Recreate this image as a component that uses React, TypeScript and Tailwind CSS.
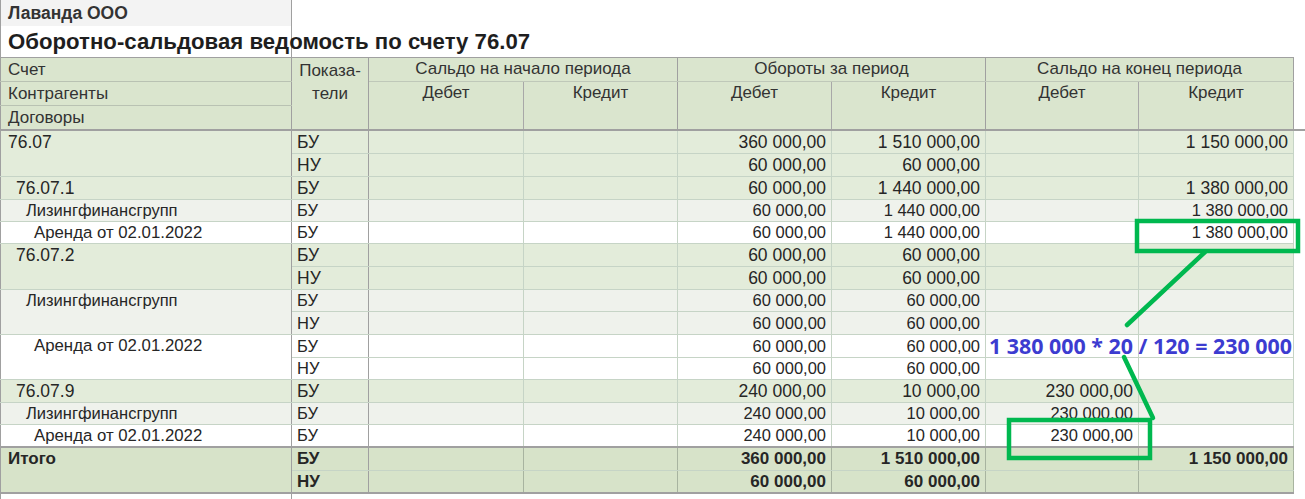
import React from "react";

type Kind = "acc" | "ka" | "dog" | "tot";
type Row = {
  label?: string;
  span?: number;
  ind?: string;
  ind2: string;
  v: string[];
  kind: Kind;
  h: string;
  lh: string;
  note?: boolean;
  totTop?: boolean;
};

const H23 = "h-[23px]";
const H22 = "h-[22px]";
const L23 = "leading-[22px]";
const L22 = "leading-[21px]";

const rows: Row[] = [
  { label: "76.07", span: 2, ind: "pl-[7px]", ind2: "БУ", v: ["", "", "360 000,00", "1 510 000,00", "", "1 150 000,00"], kind: "acc", h: H23, lh: L23 },
  { ind2: "НУ", v: ["", "", "60 000,00", "60 000,00", "", ""], kind: "acc", h: H23, lh: L23 },
  { label: "76.07.1", span: 1, ind: "pl-[15px]", ind2: "БУ", v: ["", "", "60 000,00", "1 440 000,00", "", "1 380 000,00"], kind: "acc", h: H23, lh: L23 },
  { label: "Лизингфинансгрупп", span: 1, ind: "pl-[25px]", ind2: "БУ", v: ["", "", "60 000,00", "1 440 000,00", "", "1 380 000,00"], kind: "ka", h: H22, lh: L22 },
  { label: "Аренда от 02.01.2022", span: 1, ind: "pl-[33px]", ind2: "БУ", v: ["", "", "60 000,00", "1 440 000,00", "", "1 380 000,00"], kind: "dog", h: H22, lh: L22 },
  { label: "76.07.2", span: 2, ind: "pl-[15px]", ind2: "БУ", v: ["", "", "60 000,00", "60 000,00", "", ""], kind: "acc", h: H23, lh: L23 },
  { ind2: "НУ", v: ["", "", "60 000,00", "60 000,00", "", ""], kind: "acc", h: H23, lh: L23 },
  { label: "Лизингфинансгрупп", span: 2, ind: "pl-[25px]", ind2: "БУ", v: ["", "", "60 000,00", "60 000,00", "", ""], kind: "ka", h: H22, lh: L22 },
  { ind2: "НУ", v: ["", "", "60 000,00", "60 000,00", "", ""], kind: "ka", h: H23, lh: L23 },
  { label: "Аренда от 02.01.2022", span: 2, ind: "pl-[33px]", ind2: "БУ", v: ["", "", "60 000,00", "60 000,00", "", ""], kind: "dog", h: H23, lh: L23, note: true },
  { ind2: "НУ", v: ["", "", "60 000,00", "60 000,00", "", ""], kind: "dog", h: H22, lh: L22 },
  { label: "76.07.9", span: 1, ind: "pl-[15px]", ind2: "БУ", v: ["", "", "240 000,00", "10 000,00", "230 000,00", ""], kind: "acc", h: H23, lh: L23 },
  { label: "Лизингфинансгрупп", span: 1, ind: "pl-[25px]", ind2: "БУ", v: ["", "", "240 000,00", "10 000,00", "230 000,00", ""], kind: "ka", h: H22, lh: L22 },
  { label: "Аренда от 02.01.2022", span: 1, ind: "pl-[33px]", ind2: "БУ", v: ["", "", "240 000,00", "10 000,00", "230 000,00", ""], kind: "dog", h: H22, lh: L22 },
  { label: "Итого", span: 2, ind: "pl-[7px]", ind2: "БУ", v: ["", "", "360 000,00", "1 510 000,00", "", "1 150 000,00"], kind: "tot", h: H23, lh: L22, totTop: true },
  { ind2: "НУ", v: ["", "", "60 000,00", "60 000,00", "", ""], kind: "tot", h: H23, lh: L22 },
];

const bgOf: Record<Kind, string> = {
  acc: "bg-[#e3ecda]",
  ka: "bg-[#eff2ec]",
  dog: "bg-white",
  tot: "bg-[#d7e3c9]",
};

const textOf: Record<Kind, string> = {
  acc: "text-[17.5px]",
  ka: "text-[16.5px]",
  dog: "text-[16.8px]",
  tot: "text-[17px] font-bold",
};

const numTextOf: Record<Kind, string> = {
  acc: "text-[17.5px]",
  ka: "text-[16.5px]",
  dog: "text-[16.5px]",
  tot: "text-[17px] font-bold",
};

const hdr = "bg-[#dae5ce] text-[17px] text-[#333] font-normal p-0 align-top whitespace-nowrap";

export default function App() {
  return (
    <div className="relative w-[1305px] h-[499px] overflow-hidden bg-white font-['Liberation_Sans',Arial,sans-serif] text-[#262626]">
      <table className="table-fixed border-collapse w-[1305px]">
        <colgroup>
          <col className="w-[291px]" />
          <col className="w-[77px]" />
          <col className="w-[155px]" />
          <col className="w-[154px]" />
          <col className="w-[154px]" />
          <col className="w-[154px]" />
          <col className="w-[153px]" />
          <col className="w-[155px]" />
          <col className="w-[12px]" />
        </colgroup>
        <tbody>
          <tr className="h-[26px]">
            <td className="p-0 align-top bg-[#f3f3f3] border-l border-l-[#a0a0a0] border-r border-r-[#a0a0a0] pl-[7px] text-[17.5px] font-bold text-[#333] leading-[26px] whitespace-nowrap">
              Лаванда ООО
            </td>
            <td colSpan={8} className="p-0" />
          </tr>
          <tr className="h-[31px]">
            <td className="p-0 align-top border-l border-l-[#a0a0a0] border-r border-r-[#a0a0a0] pl-[7px] text-[22.2px] font-bold text-[#1e1e1e] leading-[31px] whitespace-nowrap overflow-visible">
              Оборотно-сальдовая ведомость по счету 76.07
            </td>
            <td colSpan={8} className="p-0" />
          </tr>

          {/* header */}
          <tr className="h-[24px]">
            <td className={`${hdr} text-left pl-[7px] leading-[23px] border-t border-t-[#a0a0a0] border-l border-l-[#a0a0a0] border-r border-r-[#a0a0a0] border-b border-b-[#b9c2b3]`}>Счет</td>
            <td rowSpan={3} className={`${hdr} text-center leading-[23px] pt-[1px] border-t border-t-[#a0a0a0] border-r border-r-[#a0a0a0] border-b-2 border-b-[#a0a0a0]`}>
              Показа-
              <br />
              тели
            </td>
            <td colSpan={2} className={`${hdr} text-center leading-[22px] border-t border-t-[#a0a0a0] border-r border-r-[#a0a0a0] border-b border-b-[#bfc8b9]`}>Сальдо на начало периода</td>
            <td colSpan={2} className={`${hdr} text-center leading-[22px] border-t border-t-[#a0a0a0] border-r border-r-[#a0a0a0] border-b border-b-[#bfc8b9]`}>Обороты за период</td>
            <td colSpan={2} className={`${hdr} text-center leading-[22px] border-t border-t-[#a0a0a0] border-r border-r-[#a0a0a0] border-b border-b-[#bfc8b9]`}>Сальдо на конец периода</td>
            <td rowSpan={3} className="p-0 border-b-2 border-b-[#a0a0a0]" />
          </tr>
          <tr className="h-[24px]">
            <td className={`${hdr} text-left pl-[7px] leading-[23px] border-l border-l-[#a0a0a0] border-r border-r-[#a0a0a0] border-b border-b-[#b9c2b3]`}>Контрагенты</td>
            <td rowSpan={2} className={`${hdr} text-center leading-[22px] border-r border-r-[#a8a8a8] border-b-2 border-b-[#a0a0a0]`}>Дебет</td>
            <td rowSpan={2} className={`${hdr} text-center leading-[22px] border-r border-r-[#a0a0a0] border-b-2 border-b-[#a0a0a0]`}>Кредит</td>
            <td rowSpan={2} className={`${hdr} text-center leading-[22px] border-r border-r-[#a8a8a8] border-b-2 border-b-[#a0a0a0]`}>Дебет</td>
            <td rowSpan={2} className={`${hdr} text-center leading-[22px] border-r border-r-[#a0a0a0] border-b-2 border-b-[#a0a0a0]`}>Кредит</td>
            <td rowSpan={2} className={`${hdr} text-center leading-[22px] border-r border-r-[#a8a8a8] border-b-2 border-b-[#a0a0a0]`}>Дебет</td>
            <td rowSpan={2} className={`${hdr} text-center leading-[22px] border-r border-r-[#a0a0a0] border-b-2 border-b-[#a0a0a0]`}>Кредит</td>
          </tr>
          <tr className="h-[24px]">
            <td className={`${hdr} text-left pl-[7px] leading-[23px] border-l border-l-[#a0a0a0] border-r border-r-[#a0a0a0] border-b-2 border-b-[#a0a0a0]`}>Договоры</td>
          </tr>

          {rows.map((r, i) => {
            const bg = bgOf[r.kind];
            const topCls = r.totTop ? "border-t-2 border-t-[#a0a0a0]" : "";
            const lastTot = i === rows.length - 1;
            const bottomCls = lastTot ? "border-b-2 border-b-[#a0a0a0]" : "border-b border-b-[#c6d4c6]";
            return (
              <tr key={i} className={r.h}>
                {r.label !== undefined && (
                  <td
                    rowSpan={r.span}
                    className={`p-0 align-top whitespace-nowrap ${bg} ${r.ind} ${textOf[r.kind]} ${r.lh} border-l border-l-[#a0a0a0] border-r border-r-[#a0a0a0] ${r.kind === "tot" ? "border-b-2 border-b-[#a0a0a0]" : "border-b border-b-[#c6d4c6]"} ${topCls}`}
                  >
                    {r.label}
                  </td>
                )}
                <td className={`p-0 align-top whitespace-nowrap pl-[5px] ${bg} ${numTextOf[r.kind]} ${r.lh} border-r border-r-[#a0a0a0] ${bottomCls} ${topCls}`}>
                  {r.ind2}
                </td>
                {r.v.map((val, j) => (
                  <td
                    key={j}
                    className={`p-0 align-top whitespace-nowrap text-right pr-[5px] ${bg} ${numTextOf[r.kind]} ${r.lh} border-r ${r.kind === "tot" ? "border-r-[#a8b4a0]" : "border-r-[#c6d4c6]"} ${bottomCls} ${topCls} ${r.note && j === 4 ? "overflow-visible" : ""}`}
                  >
                    {r.note && j === 4 ? (
                      <span className="block text-left pl-[3px] font-['Open_Sans',sans-serif] font-bold text-[21.4px] leading-[22px] text-[#3c3cd0]">
                        1 380 000 * 20 / 120 = 230 000
                      </span>
                    ) : (
                      val
                    )}
                  </td>
                ))}
                <td className="p-0" />
              </tr>
            );
          })}
          <tr className="h-[10px]">
            <td className="p-0 border-l border-l-[#a0a0a0] border-r border-r-[#a0a0a0]" />
            <td colSpan={8} className="p-0" />
          </tr>
        </tbody>
      </table>

      <svg
        className="absolute left-0 top-0 pointer-events-none"
        width={1305}
        height={499}
        viewBox="0 0 1305 499"
      >
        <g stroke="#00b84f" strokeWidth={4.5} fill="none" strokeLinecap="round" strokeLinejoin="miter">
          <rect x={1137} y={221} width={161} height={30} />
          <rect x={1009} y={420} width={141} height={38} />
          <line x1={1205} y1={252} x2={1127} y2={325} />
          <line x1={1124} y1={357} x2={1153} y2={418} />
        </g>
      </svg>
    </div>
  );
}
